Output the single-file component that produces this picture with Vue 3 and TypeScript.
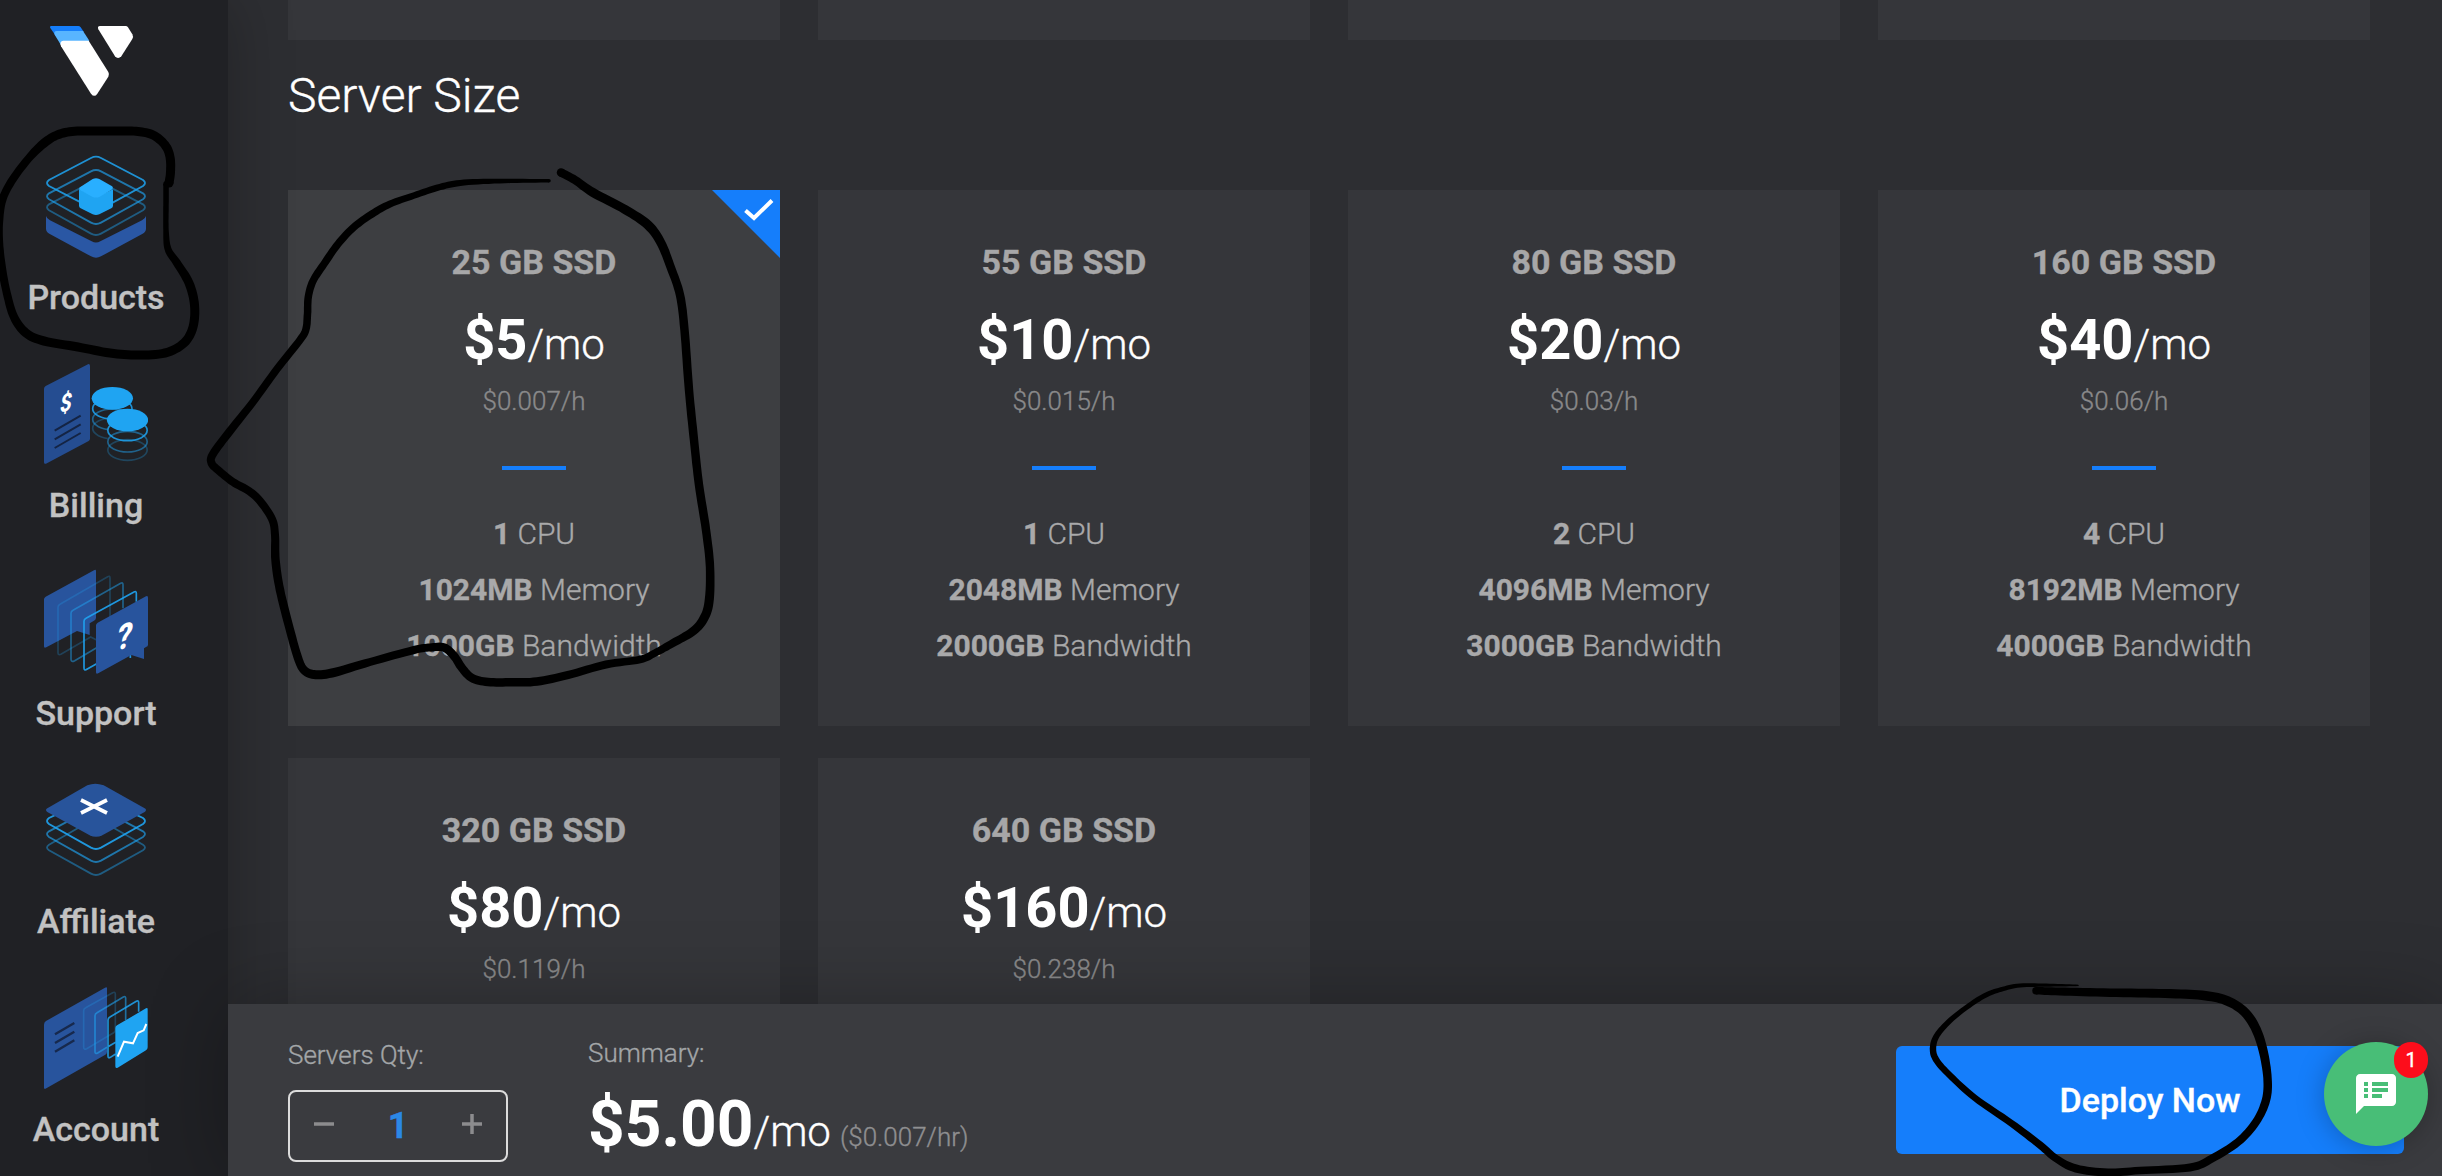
<script setup lang="ts">
interface Plan {
  disk: string
  price: string
  rate: string
  specs: [string, string][]
  selected?: boolean
}

const specs = (cpu: string, memory: string, bandwidth: string): [string, string][] => [
  [cpu, 'CPU'],
  [memory, 'Memory'],
  [bandwidth, 'Bandwidth'],
]

const plans: Plan[] = [
  { disk: '25 GB SSD', price: '$5', rate: '$0.007/h', specs: specs('1', '1024MB', '1000GB'), selected: true },
  { disk: '55 GB SSD', price: '$10', rate: '$0.015/h', specs: specs('1', '2048MB', '2000GB') },
  { disk: '80 GB SSD', price: '$20', rate: '$0.03/h', specs: specs('2', '4096MB', '3000GB') },
  { disk: '160 GB SSD', price: '$40', rate: '$0.06/h', specs: specs('4', '8192MB', '4000GB') },
  { disk: '320 GB SSD', price: '$80', rate: '$0.119/h', specs: [] },
  { disk: '640 GB SSD', price: '$160', rate: '$0.238/h', specs: [] },
]

// Pen marks: each point is x, y and pen width.
type Pt = [number, number, number]

const marks: Pt[][] = [
  [
    [169, 183, 9], [170.5, 172, 9], [170, 157, 9], [165, 145, 9], [153, 135, 9], [138, 131.5, 9], [120, 131, 9], [96, 131, 9],
    [72, 131.5, 9], [56, 135.5, 9], [43, 144, 9], [29, 158, 8], [13, 179, 8], [3, 198, 8], [-0.5, 217, 8], [-1, 240, 8],
    [2, 268, 8], [7, 294, 8], [14, 317, 8.5], [26, 333, 9], [44, 341, 9], [78, 347, 9], [110, 353, 9], [138, 355, 9],
    [165, 353, 9], [184, 343, 9], [193, 327, 9], [194.5, 305, 9], [189, 283, 9], [177, 263, 8], [168, 249, 7],
    [166, 230, 5.5], [166, 205, 5.5], [166, 184, 5.5],
  ],
  [
    [549, 180.8, 3.5], [505, 181, 4.5], [464, 182.5, 6], [440, 187, 6.5], [414, 195.5, 6.5], [390, 204, 7], [372, 214, 7.5], [354, 227, 7.5],
    [338, 244, 7.5], [324, 264, 7.5], [313, 281, 7.5], [308.3, 297, 7.5], [307.5, 314, 7.5], [306, 329, 7.5], [300, 340, 7.5],
    [277, 369, 7.5], [253, 402, 7.5], [230, 431, 8], [213, 454, 8], [211.5, 463, 8], [218, 470, 8], [233, 482, 8],
    [249, 491, 8], [260, 501, 8], [272, 519, 8], [275, 535, 8], [275.5, 560, 8.5], [280, 590, 8.5], [290, 630, 8.5],
    [298, 658, 8.5], [304, 670, 8.5], [314, 674.5, 9], [332, 673, 9], [370, 662, 8], [414, 650, 8], [430, 647.5, 8],
    [444, 647.5, 8.5], [454, 656, 8.5], [462, 668, 8.5], [472, 678, 8.5], [488, 682, 8.5], [512, 682.3, 8.5], [537, 681.5, 8.5],
    [568, 675, 8], [606, 664.5, 8], [640, 659.5, 7.5], [655, 653, 7.5], [673, 643, 8], [692, 632, 8.5], [703, 620, 9],
    [709, 602, 9], [710, 567, 8.5], [706, 530, 8.5], [699, 485, 8.5], [694, 440, 8.5], [689, 390, 8.5], [684.5, 330, 8.5],
    [680, 295, 8.5], [671, 268, 8.5], [661, 243, 9], [648, 225, 9.5], [625, 209.5, 9], [593, 192.5, 9], [575, 180, 8.5], [561, 172.5, 8.5],
  ],
  [
    [2078, 985.4, 1.5], [2050, 985.2, 3], [2020, 985.5, 4], [2001, 989.5, 4.5], [1985, 995.5, 5], [1967, 1007, 5], [1948, 1022.5, 5.5], [1936, 1037, 6],
    [1933, 1050, 6.5], [1937, 1061, 6.5], [1950, 1075.5, 6.5], [1975, 1098, 6.5], [2011, 1123, 7], [2040, 1145, 7.5],
    [2056, 1158.5, 7.5], [2076, 1168.5, 8], [2108, 1172.5, 8], [2140, 1170.5, 7.5], [2190, 1167.5, 8], [2212, 1158.5, 8],
    [2238, 1142, 8], [2256, 1122, 8], [2266, 1100, 8.5], [2267.5, 1078, 8.5], [2263, 1050, 9], [2255, 1027, 9.5],
    [2243, 1010.5, 9.5], [2225, 1000, 9.5], [2202, 995.3, 9.5], [2165, 993.5, 9], [2110, 992.7, 8.5], [2060, 991.5, 8], [2036, 990.7, 7.5],
  ],
]

function spline(a: number, b: number, c: number, d: number, t: number): number {
  return 0.5 * (2 * b + (c - a) * t + (2 * a - 5 * b + 4 * c - d) * t * t + (3 * b - a - 3 * c + d) * t * t * t)
}

function outline(pts: Pt[]): string {
  const line: Pt[] = []
  for (let i = 0; i < pts.length - 1; i++) {
    const p = [pts[Math.max(0, i - 1)], pts[i], pts[i + 1], pts[Math.min(pts.length - 1, i + 2)]]
    for (let s = 0; s < 8; s++) {
      const at = (k: number) => spline(p[0][k], p[1][k], p[2][k], p[3][k], s / 8)
      line.push([at(0), at(1), at(2)])
    }
  }
  line.push(pts[pts.length - 1])
  const left: string[] = []
  const right: string[] = []
  line.forEach((q, i) => {
    const a = line[Math.max(0, i - 1)]
    const b = line[Math.min(line.length - 1, i + 1)]
    const len = Math.hypot(b[0] - a[0], b[1] - a[1]) || 1
    const nx = (-(b[1] - a[1]) / len) * (q[2] / 2)
    const ny = ((b[0] - a[0]) / len) * (q[2] / 2)
    left.push(`${(q[0] + nx).toFixed(1)} ${(q[1] + ny).toFixed(1)}`)
    right.unshift(`${(q[0] - nx).toFixed(1)} ${(q[1] - ny).toFixed(1)}`)
  })
  return `M${left.concat(right).join('L')}Z`
}

const strokes = marks.map((m) => ({ d: outline(m), caps: [m[0], m[m.length - 1]] }))
</script>

<template>
  <div class="app">
    <aside class="sidebar">
      <svg class="logo" viewBox="144 72 264 222">
        <path fill="#157efb" d="M154 78H235Q239 78 242 82L252 97L170 112L151 84Q148 78 154 78Z" />
        <path fill="#58b5ff" d="M170 93H249L268 122L186 140L164 104Q160 94 170 93Z" />
        <path fill="#fff" d="M190 122H266L325 216Q329 223 325 230L292 281Q283 294 273 281L183 139Q177 124 190 122Z" />
        <path fill="#fff" d="M300 78H377Q381 78 384 82L397 103Q401 110 397 117L364 169Q354 179 345 169L295 88Q291 79 300 78Z" />
      </svg>
      <nav class="nav">
        <a class="item">
          <svg class="icon" viewBox="132 450 312 348">
            <path fill="#2a57a4" d="M138 648Q140 656 150 661L275 724Q288 731 301 724L426 661Q436 656 438 648V686Q438 695 428 701L303 769Q288 777 273 769L148 701Q138 695 138 686Z" />
            <g fill="none" stroke="#1fa4f2" stroke-width="5.500">
              <path opacity=".45" d="M147 613Q135 622 147 631L273 701Q288 709 303 701L429 631Q441 622 429 613L303 548Q288 540 273 548Z" />
              <path opacity=".65" d="M147 580Q135 589 147 598L273 668Q288 676 303 668L429 598Q441 589 429 580L303 514Q288 506 273 514Z" />
              <path opacity=".85" d="M238 605L147 558Q135 549 147 540L273 474Q288 466 303 474L429 540Q441 549 429 558L338 608" />
            </g>
            <path fill="#1fa4f2" d="M237 568L288 592L339 568V617Q339 622 334 625L298 643Q288 647 278 643L242 625Q237 622 237 617Z" />
            <path fill="#29afff" d="M241 561L278 537Q288 532 298 537L335 558Q342 563 335 569L298 591Q288 596 278 591L241 571Q234 566 241 561Z" />
          </svg>
          <span>Products</span>
        </a>
        <a class="item">
          <svg class="icon" viewBox="132 24 312 348">
            <path fill="#254d91" d="M132 116Q132 111 137 108L264 43Q269 40 270 47V266Q270 270 266 273L138 341Q132 343 132 337Z" />
            <g stroke="#142444" stroke-width="6" fill="none"><path d="M164 242L242 197M164 268L242 223M164 294L242 249" /></g>
            <text x="0" y="0" transform="matrix(1 -.38 0 1 180 190)" font-family="Roboto, sans-serif" font-weight="800" font-style="italic" font-size="72" textLength="36" lengthAdjust="spacingAndGlyphs" fill="#fff">$</text>
            <g fill="none" stroke="#1fa4f2" stroke-width="5">
              <ellipse opacity=".28" cx="337" cy="235" rx="59" ry="31" />
              <ellipse opacity=".5" cx="337" cy="208" rx="59" ry="31" />
              <ellipse opacity=".85" cx="337" cy="176" rx="59" ry="31" />
            </g>
            <ellipse fill="#1fa4f2" cx="337" cy="145" rx="62" ry="34" />
            <path fill="#202125" d="M323 210V300A60 31 0 0 0 442 300V210Z" />
            <g fill="none" stroke="#1fa4f2" stroke-width="5">
              <ellipse opacity=".28" cx="382.500" cy="300" rx="59" ry="31" />
              <ellipse opacity=".5" cx="382.500" cy="275" rx="59" ry="31" />
              <ellipse opacity=".85" cx="382.500" cy="241" rx="59" ry="31" />
            </g>
            <ellipse fill="#1fa4f2" cx="382.500" cy="210" rx="62" ry="34" />
          </svg>
          <span>Billing</span>
        </a>
        <a class="item">
          <svg class="icon" viewBox="132 648 312 348">
            <path fill="#28549d" d="M132 748Q132 743 137 740L282 661Q288 657 288 664V803Q288 809 282 812L269 820V855L231 843L139 892Q132 896 132 889Z" />
            <g fill="none" stroke="#1fa4f2" stroke-width="5">
              <path opacity=".25" d="M290 870L272 861L184 912Q174 917 174 908V772Q174 766 180 763L323 680Q330 676 330 684V800" />
              <path opacity=".5" d="M290 893L224 932Q213 938 213 928V790Q213 784 219 781L362 700Q369 696 369 704V775" />
              <path opacity=".9" d="M290 941L262 957Q252 964 252 954V814Q252 808 258 805L402 726Q409 722 409 730V755M391 905V924" />
            </g>
            <path fill="#28549d" d="M288 826Q288 821 293 818L438 739Q444 736 444 743V884Q444 889 438 891L432 895V927L394 915L296 969Q288 974 288 967Z" />
            <text x="0" y="0" transform="matrix(1 -.4 0 1 351 904)" font-family="Roboto, sans-serif" font-weight="800" font-style="italic" font-size="103" textLength="46" lengthAdjust="spacingAndGlyphs" fill="#fff">?</text>
          </svg>
          <span>Support</span>
        </a>
        <a class="item">
          <svg class="icon" viewBox="132 72 312 348">
            <g fill="none" stroke="#1fa4f2" stroke-width="5.500">
              <path opacity=".45" d="M250 225L147 284Q135 292 147 301L273 371Q288 379 303 371L429 301Q441 292 429 284L326 225" />
              <path opacity=".65" d="M220 205L147 244Q135 252 147 261L273 332Q288 340 303 332L429 261Q441 252 429 244L356 205" />
              <path opacity=".9" d="M170 193L147 204Q135 213 147 222L273 293Q288 301 303 293L429 222Q441 213 429 204L406 193" />
            </g>
            <path fill="#28549b" d="M142 175L262 106Q285 96 311 106L434 175Q442 180 434 186L307 256Q288 265 269 256L142 186Q134 180 142 175Z" />
            <path stroke="#fff" stroke-width="11" fill="none" d="M243 150L321 189M321 150L243 189" />
          </svg>
          <span>Affiliate</span>
        </a>
        <a class="item">
          <svg class="icon" viewBox="132 696 312 348">
            <path fill="#28549d" d="M132 824Q132 817 138 813L315 713Q321 709 321 715V905Q321 911 316 914L139 1015Q132 1019 132 1013Z" />
            <g stroke="#17294d" stroke-width="7" fill="none"><path d="M165 853L223 819M165 879L223 845M165 905L223 871" /></g>
            <g fill="none" stroke="#1fa4f2" stroke-width="5">
              <path opacity=".25" d="M251 782Q251 776 257 773L338 728Q346 724 346 733V840Q346 845 341 848L260 896Q251 900 251 892Z" />
              <path opacity=".6" d="M321 892L293 909Q285 913 285 905V797Q285 791 291 788L370 741Q377 737 377 745V810" />
              <path opacity=".85" d="M347 912L331 922Q324 926 324 918V810Q324 804 330 801L409 754Q416 750 416 758V785M324 890L347 877" />
            </g>
            <path fill="#1fa4f2" d="M346 834Q346 829 351 826L438 775Q443 772 443 778V892Q443 898 438 901L353 953Q346 957 346 949Z" />
            <path stroke="#fff" stroke-width="6" fill="none" d="M353 920L372 875L399 880L413 849L431 841L439 822" />
          </svg>
          <span>Account</span>
        </a>
      </nav>
    </aside>

    <main class="main">
      <div class="content">
        <div class="grid previous"><div v-for="n in 4" :key="n" class="stub"></div></div>
        <h1 class="heading">Server Size</h1>
        <div class="grid">
          <section v-for="p in plans" :key="p.disk" class="card" :class="{ selected: p.selected }">
            <svg v-if="p.selected" class="tick" viewBox="0 0 68 68">
              <path fill="#157efb" d="M0 0H68V68Z" />
              <path fill="none" stroke="#fff" stroke-width="4" d="M33.500 20.500L42 28L60 10.500" />
            </svg>
            <h2 class="disk">{{ p.disk }}</h2>
            <p class="price"><b>{{ p.price }}</b><span>/mo</span></p>
            <p class="rate">{{ p.rate }}</p>
            <div class="rule"></div>
            <ul class="specs">
              <li v-for="[amount, unit] in p.specs" :key="unit"><b>{{ amount }}</b> {{ unit }}</li>
            </ul>
          </section>
        </div>
      </div>

      <footer class="bar">
        <div class="qty">
          <span class="label">Servers Qty:</span>
          <div class="stepper">
            <svg viewBox="0 0 20 20"><path d="M0 10H20" /></svg>
            <b>1</b>
            <svg viewBox="0 0 20 20"><path d="M0 10H20M10 0V20" /></svg>
          </div>
        </div>
        <div class="summary">
          <span class="label">Summary:</span>
          <p class="total"><b>$5.00</b><span class="per">/mo</span><span class="hr">($0.007/hr)</span></p>
        </div>
        <button class="deploy">Deploy Now</button>
      </footer>
    </main>

    <div class="chat">
      <svg viewBox="0 0 24 24"><path fill="#fff" d="M20 2H4c-1.100 0-1.990.9-1.990 2L2 22l4-4h14c1.100 0 2-.9 2-2V4c0-1.100-.9-2-2-2zM8 14H6v-2h2v2zm0-3H6V9h2v2zm0-3H6V6h2v2zm7 6h-5v-2h5v2zm3-3h-8V9h8v2zm0-3h-8V6h8v2z" /></svg>
      <span class="badge">1</span>
    </div>

    <svg class="marks" viewBox="0 0 2442 1176">
      <g v-for="(s, i) in strokes" :key="i">
        <path :d="s.d" fill-rule="nonzero" />
        <circle v-for="(c, k) in s.caps" :key="k" :cx="c[0]" :cy="c[1]" :r="c[2] / 2" />
      </g>
    </svg>
  </div>
</template>

<style>
body {
  margin: 0;
  background: #2d2e32;
}
</style>

<style scoped>
.app {
  position: relative;
  display: flex;
  width: 2442px;
  height: 1176px;
  overflow: hidden;
  background: #2d2e32;
  color: #fff;
  font-family: Roboto, "Liberation Sans", sans-serif;
  -webkit-text-stroke-width: 0.35px;
}
.sidebar {
  position: relative;
  z-index: 1;
  box-sizing: border-box;
  width: 228px;
  flex: none;
  padding-right: 36px;
  background: #202125;
  box-shadow: 0 0 60px rgba(0, 0, 0, 0.25);
}
.logo {
  display: block;
  width: 88px;
  height: 74px;
  margin: 24px 0 0 48px;
}
.nav {
  display: flex;
  flex-direction: column;
  padding-top: 52px;
}
.item {
  display: flex;
  flex-direction: column;
  align-items: center;
  height: 208px;
}
.icon {
  width: 104px;
  height: 116px;
}
.item span {
  margin-top: 11px;
  font-size: 34px;
  line-height: 40px;
  font-weight: 500;
  color: #c2c2c2;
}
.main {
  display: flex;
  flex: 1;
  flex-direction: column;
}
.content {
  box-sizing: border-box;
  height: 1004px;
  padding: 0 72px 0 60px;
  overflow: hidden;
}
.grid {
  display: grid;
  grid-template-columns: repeat(4, 492px);
  gap: 32px 38px;
}
.stub {
  height: 40px;
  background: #35363a;
}
.heading {
  margin: 26px 0 64px;
  font-size: 48px;
  line-height: 60px;
  font-weight: 300;
}
.card {
  position: relative;
  box-sizing: border-box;
  height: 536px;
  padding-top: 52px;
  background: #35363a;
  text-align: center;
}
.card.selected {
  background: #3d3e41;
}
.tick {
  position: absolute;
  top: 0;
  right: 0;
  width: 68px;
  height: 68px;
}
.disk {
  margin: 0;
  font-size: 34px;
  line-height: 40px;
  font-weight: 700;
  color: #a7a7a8;
}
.price {
  margin: 24px 0 0;
  height: 68px;
  line-height: 68px;
  font-size: 56px;
}
.price b {
  font-weight: 700;
  -webkit-text-stroke-width: 0;
}
.price span {
  font-size: 42px;
  font-weight: 300;
}
.rate {
  margin: 11px 0 0;
  font-size: 26px;
  line-height: 32px;
  font-weight: 300;
  color: #8a8a8b;
}
.rule {
  width: 64px;
  height: 4px;
  margin: 49px auto 36px;
  background: #157efb;
}
.specs {
  margin: 0;
  padding: 0;
  list-style: none;
  font-size: 30px;
  line-height: 56px;
  font-weight: 300;
  color: #a9a9aa;
}
.specs b {
  font-weight: 700;
}
.bar {
  position: relative;
  z-index: 2;
  display: flex;
  height: 172px;
  padding-left: 60px;
  background: #3a3b3f;
  box-shadow: 0 0 80px rgba(0, 0, 0, 0.28);
}
.qty {
  width: 300px;
  padding-top: 35px;
}
.label {
  display: block;
  font-size: 26px;
  line-height: 32px;
  font-weight: 300;
  color: #a3a6a8;
}
.stepper {
  display: flex;
  align-items: center;
  justify-content: space-between;
  box-sizing: border-box;
  width: 220px;
  height: 72px;
  margin-top: 19px;
  padding: 0 24px;
  border: 2px solid #dcdcdc;
  border-radius: 8px;
}
.stepper svg {
  width: 20px;
  height: 20px;
  margin-bottom: 4px;
  fill: none;
  stroke: #8c8c8e;
  stroke-width: 3.5;
}
.stepper b {
  font-size: 36px;
  line-height: 40px;
  color: #2b88e6;
}
.summary {
  flex: 1;
  padding-top: 33px;
}
.total {
  display: flex;
  align-items: baseline;
  margin: 16px 0 0;
  line-height: 80px;
}
.total b {
  font-size: 64px;
  font-weight: 700;
  -webkit-text-stroke-width: 0;
}
.per {
  font-size: 42px;
  font-weight: 300;
}
.hr {
  margin-left: 9px;
  font-size: 26px;
  font-weight: 300;
  color: #8f8f91;
}
.deploy {
  width: 508px;
  height: 108px;
  margin: 42px 38px 0 0;
  border: 0;
  border-radius: 6px;
  background: #157efb;
  color: #fff;
  font: 500 34px/40px Roboto, "Liberation Sans", sans-serif;
}
.chat {
  position: absolute;
  z-index: 3;
  left: 2324px;
  top: 1042px;
  display: flex;
  align-items: center;
  justify-content: center;
  width: 104px;
  height: 104px;
  border-radius: 50%;
  background: #48be77;
  box-shadow: 0 2px 28px rgba(0, 0, 0, 0.25);
}
.chat svg {
  width: 48px;
  height: 48px;
}
.badge {
  position: absolute;
  top: 0;
  right: 0;
  width: 34px;
  height: 36px;
  border-radius: 17px;
  background: #fd0d1b;
  font-size: 20px;
  line-height: 36px;
  text-align: center;
}
.marks {
  position: absolute;
  z-index: 4;
  left: 0;
  top: 0;
  width: 2442px;
  height: 1176px;
  pointer-events: none;
}
</style>
